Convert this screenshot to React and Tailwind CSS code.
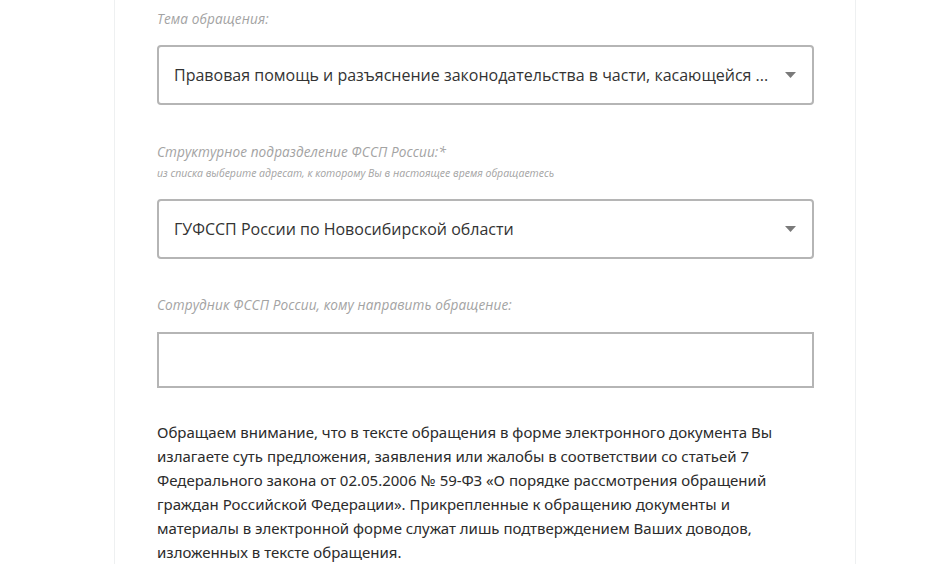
import React from "react";

const labelCls =
  "italic text-[13.6px] leading-[18px] tracking-[0.1px] text-[#a3a3a3] font-['Open_Sans',sans-serif]";

function Caret() {
  return (
    <svg width="11" height="6" viewBox="0 0 11 6" className="shrink-0">
      <path d="M0 0 L11 0 L5.5 6 Z" fill="#7a7a7a" />
    </svg>
  );
}

function Select({ children }) {
  return (
    <div className="w-[657px] h-[60px] border-2 border-[#b5b5b5] rounded-[4px] flex items-center pl-[15px] pr-[16px] gap-4 bg-white">
      <div className="flex-1 min-w-0 truncate text-[16px] text-[#333] font-['Open_Sans',sans-serif]">
        {children}
      </div>
      <Caret />
    </div>
  );
}

export default function App() {
  return (
    <div className="w-[949px] h-[564px] bg-white overflow-hidden">
      <div className="ml-[114px] w-[742px] h-full border-x border-[#eef0f1] pl-[42px] flex flex-col">
        <div className={labelCls + " mt-[10px]"}>Тема обращения:</div>
        <div className="mt-[17px]">
          <Select>
            Правовая помощь и разъяснение законодательства в части, касающейся ...
          </Select>
        </div>
        <div className={labelCls + " mt-[38px]"}>
          Структурное подразделение ФССП России:*
        </div>
        <div className="italic text-[10.5px] leading-[14px] text-[#a3a3a3] font-['Open_Sans',sans-serif] mt-[5px]">
          из списка выберите адресат, к которому Вы в настоящее время обращаетесь
        </div>
        <div className="mt-[19px]">
          <Select>ГУФССП России по Новосибирской области</Select>
        </div>
        <div className={labelCls + " mt-[37px]"}>
          Сотрудник ФССП России, кому направить обращение:
        </div>
        <div className="mt-[18px] w-[657px] h-[60px] border-2 border-[#b5b5b5] bg-white" />
        <p className="mt-[32px] w-[640px] text-[15px] leading-[24px] text-[#2b2b2b] font-['Noto_Sans',sans-serif]">
          Обращаем внимание, что в тексте обращения в форме электронного документа Вы
          излагаете суть предложения, заявления или жалобы в соответствии со статьей 7
          Федерального закона от 02.05.2006 № 59-ФЗ «О порядке рассмотрения обращений
          граждан Российской Федерации». Прикрепленные к обращению документы и
          материалы в электронной форме служат лишь подтверждением Ваших доводов,
          изложенных в тексте обращения.
        </p>
      </div>
    </div>
  );
}
